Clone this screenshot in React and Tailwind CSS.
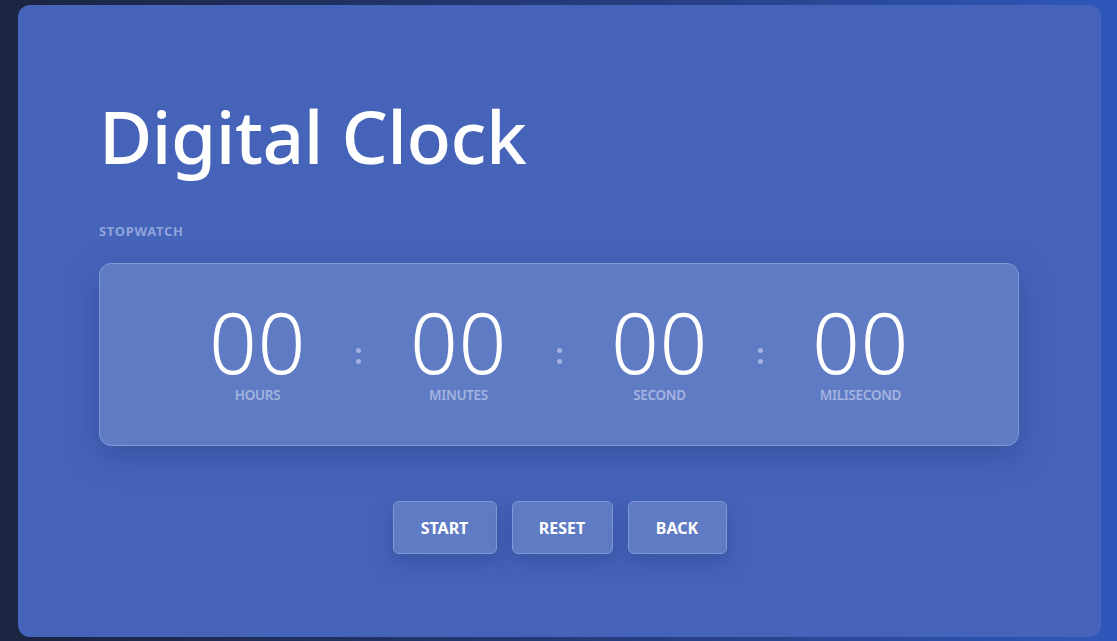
import React from 'react';

const units = [
  { value: '00', label: 'HOURS' },
  { value: '00', label: 'MINUTES' },
  { value: '00', label: 'SECOND' },
  { value: '00', label: 'MILISECOND' },
];

const font = { fontFamily: '"Noto Sans", "Open Sans", sans-serif' };

export default function App() {
  return (
    <div
      className="w-[1117px] h-[641px] overflow-hidden bg-gradient-to-r from-[#1b2440] via-[#243a78] to-[#2f57bb] pt-[5px] pl-[18px]"
      style={font}
    >
      <div className="w-[1083px] h-[632px] rounded-xl bg-[#4564b9] px-[81px] pt-[83px]">
        <h1 className="text-[73px] leading-[96px] font-medium text-white tracking-[-0.5px]">Digital Clock</h1>

        <p className="mt-[39px] text-[13px] leading-[16px] font-bold text-[#8fa3db] tracking-[0.7px]">STOPWATCH</p>

        <div className="mt-[24px] w-[920px] h-[183px] rounded-xl bg-[#5f7bc4] border border-[#8299d6] shadow-[0_10px_30px_rgba(30,50,120,0.35)] flex items-center justify-center">
          {units.map((u, i) => (
            <React.Fragment key={u.label}>
              {i > 0 && (
                <div className="w-[31px] flex flex-col items-center gap-[6px] pt-[2px]">
                  <span className="w-[5px] h-[5px] rounded-full bg-[#a4b3e0]" />
                  <span className="w-[5px] h-[5px] rounded-full bg-[#a4b3e0]" />
                </div>
              )}
              <div className="w-[170px] flex flex-col items-center">
                <div className="h-[70px] text-[84px] leading-[70px] font-light text-white tracking-[0.5px]">{u.value}</div>
                <div className="mt-[10px] text-[13.5px] leading-[16px] font-semibold text-[#a4b3e0] tracking-[-0.3px]">{u.label}</div>
              </div>
            </React.Fragment>
          ))}
        </div>

        <div className="mt-[55px] flex justify-center gap-[15px]">
          {['START', 'RESET', 'BACK'].map((b, i) => (
            <button
              key={b}
              className={`h-[53px] ${i === 0 ? 'w-[104px]' : i === 1 ? 'w-[101px]' : 'w-[99px]'} rounded-md bg-[#5f7bc4] border border-[#8299d6] shadow-[0_8px_20px_rgba(30,50,120,0.35)] text-white text-[16px] font-bold`}
            >
              {b}
            </button>
          ))}
        </div>
      </div>
    </div>
  );
}
